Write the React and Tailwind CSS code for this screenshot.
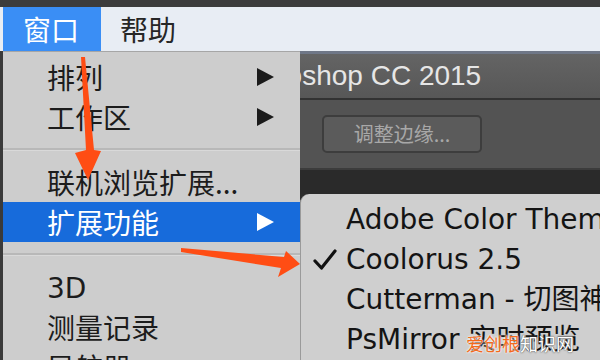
import React from 'react';

const cjk = "font-['PingFang_SC','Noto_Sans_CJK_SC',sans-serif]";
const latin = "font-['DejaVu_Sans','Noto_Sans_CJK_SC',sans-serif]";

const Tri = ({ color = '#1b1b1b' }) => (
  <svg width="19" height="20" viewBox="0 0 19 20">
    <polygon points="1,1 18,10 1,19" fill={color} />
  </svg>
);

const Row = ({ label, sub, active }) => (
  <div
    className={`h-[40px] flex items-center justify-between pl-[44px] pr-[25px] ${
      active ? 'bg-[#176bdb] text-white' : 'text-[#1c1c1c]'
    }`}
  >
    <span>{label}</span>
    {sub && <Tri color={active ? '#ffffff' : '#1b1b1b'} />}
  </div>
);

const Sep = () => (
  <div className="h-[25px] flex flex-col justify-center">
    <div className="h-[3px] bg-[#b8b8b8] border-b border-[#d9d9d9]" />
  </div>
);

const SubRow = ({ label, checked }) => (
  <div className="h-[40px] flex items-center whitespace-nowrap text-[#141414]">
    <div className="w-[45px] shrink-0 flex justify-end pr-[9px]">
      {checked && (
        <svg width="24" height="22" viewBox="0 0 24 22">
          <path d="M2 12 L8.5 19 L22 2" fill="none" stroke="#111" strokeWidth="3.2" strokeLinecap="round" strokeLinejoin="round" />
        </svg>
      )}
    </div>
    <span>{label}</span>
  </div>
);

export default function App() {
  return (
    <div className={`relative w-[600px] h-[360px] overflow-hidden bg-[#2b2b2b] ${cjk}`}>
      <div className="h-[7px] bg-[#3c3c3c]" />

      {/* menu bar */}
      <div className="flex h-[44px] bg-[#e8edf4] text-[28px] pl-[3px]">
        <div className="w-[98px] bg-[#3a8ef5] text-white flex items-center pl-[20px]">窗口</div>
        <div className="flex items-center pl-[19px] text-[#262626]">帮助</div>
      </div>

      <div className="flex h-[309px]">
        <div className="w-[3px] shrink-0 bg-[#3a3a3a]" />

        {/* 窗口 dropdown */}
        <div className="w-[297px] shrink-0 bg-[#cdcdcd] border-t border-[#a6a6a6] pt-[5px] text-[28px] leading-none">
          <Row label="排列" sub />
          <Row label="工作区" sub />
          <Sep />
          <Row label="联机浏览扩展..." />
          <Row label="扩展功能" sub active />
          <Sep />
          <Row label={<span className={latin}>3D</span>} />
          <Row label="测量记录" />
          <Row label="导航器" />
        </div>

        {/* photoshop window */}
        <div className="flex-1 min-w-0 flex flex-col overflow-hidden">
          <div className="h-[49px] bg-gradient-to-b from-[#646464] to-[#575757] border-t-[3px] border-[#6f7787] border-b-2 border-b-[#323232] flex items-center overflow-hidden">
            <span className="ml-[-71px] shrink-0 whitespace-nowrap font-['Liberation_Sans',sans-serif] text-[28px] text-[#e6e6e6]">
              Photoshop CC 2015
            </span>
          </div>
          <div className="h-[70px] bg-[#535353] border-b-2 border-[#3c3c3c] flex items-center pl-[22px]">
            <div className="w-[160px] h-[38px] rounded-[5px] border-2 border-[#3d3d3d] bg-[#5b5b5b] flex items-center justify-center text-[20px] text-[#a8a8a8]">
              调整边缘...
            </div>
          </div>
          <div className="h-[24px] bg-[#2a2a2a]" />

          {/* extensions submenu */}
          <div className={`flex-1 bg-[#cfcfcf] rounded-tl-[9px] border-l border-[#9a9a9a] pt-[6px] text-[28px] leading-none overflow-hidden ${latin}`}>
            <SubRow label="Adobe Color Themes" />
            <SubRow label="Coolorus 2.5" checked />
            <SubRow label="Cutterman - 切图神器" />
            <SubRow label="PsMirror 实时预览" />
          </div>
        </div>
      </div>

      {/* red arrows */}
      <svg className="absolute inset-0 pointer-events-none" width="600" height="360" viewBox="0 0 600 360">
        <polygon points="81,57 85,57 94,150 101,151 88,180 75,153 86,150" fill="#ff4d14" />
        <polygon points="181,248 284,257 286,251 300,264 278,277 281,268 181,252" fill="#ff4d14" />
      </svg>

      {/* watermark */}
      <div className="absolute left-[466px] top-[330px] text-[18px] leading-[26px] whitespace-nowrap">
        <span className="text-[#f36a1c] [text-shadow:0_0_2px_#ffffff,0_0_2px_#ffffff]">爱创根</span>
        <span className="text-white [text-shadow:0_0_2px_#555,0_0_1px_#555]">知识网</span>
      </div>
    </div>
  );
}
